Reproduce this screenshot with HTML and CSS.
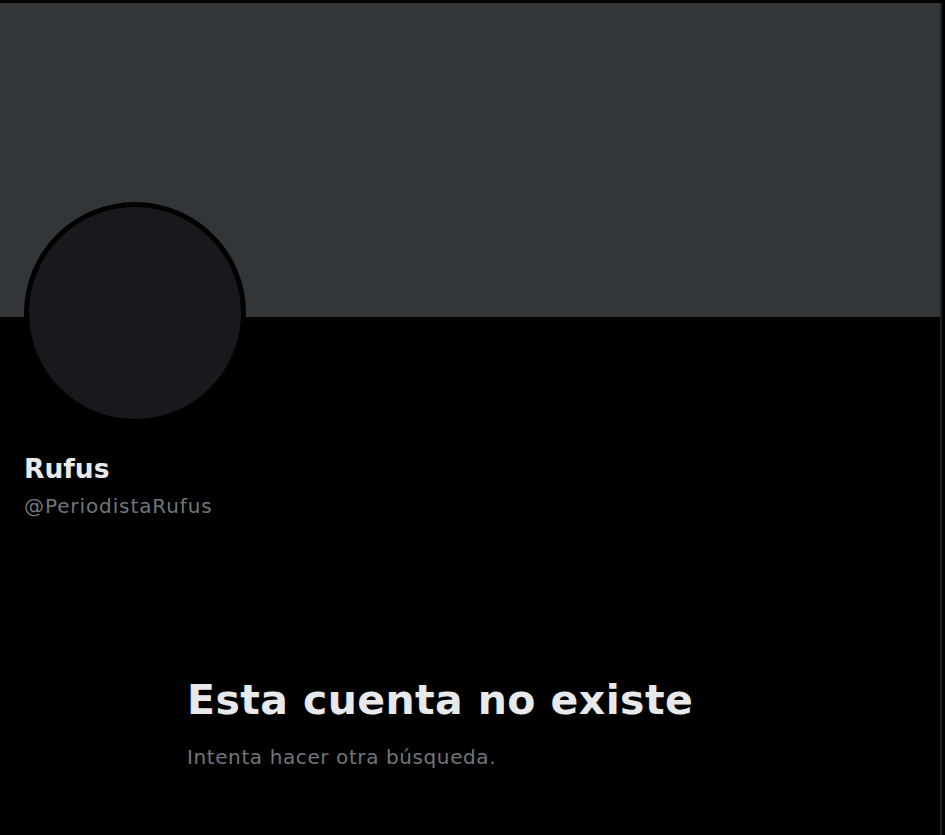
FILE: index.html
```html
<!DOCTYPE html>
<html lang="es">
<head>
<meta charset="utf-8">
<title>Rufus</title>
<link rel="stylesheet" href="styles.css">
</head>
<body>
<div class="page">
  <div class="column">
    <div class="banner"></div>
    <div class="profile">
      <div class="avatar"><div class="avatar-inner"></div></div>
      <div class="name">Rufus</div>
      <div class="handle">@PeriodistaRufus</div>
    </div>
    <div class="empty">
      <h1 class="empty-title">Esta cuenta no existe</h1>
      <p class="empty-sub">Intenta hacer otra búsqueda.</p>
    </div>
  </div>
</div>
</body>
</html>
```

FILE: styles.css
```css
html, body {
  margin: 0;
  padding: 0;
  background: #000;
  height: 100%;
}
body {
  font-family: "DejaVu Sans", Inter, "Liberation Sans", sans-serif;
  color: #e7e9ea;
  overflow: hidden;
}
.page {
  display: flex;
  height: 835px;
  padding-top: 3px;
  box-sizing: border-box;
}
.column {
  width: 940px;
  border-right: 2px solid #1f2124;
  display: flex;
  flex-direction: column;
}
.banner {
  height: 314px;
  background: #333639;
}
.profile {
  padding-left: 24px;
  display: flex;
  flex-direction: column;
  align-items: flex-start;
}
.avatar {
  width: 222px;
  height: 222px;
  margin-top: -115px;
  border-radius: 50%;
  background: #000;
  padding: 5px;
  box-sizing: border-box;
}
.avatar-inner {
  width: 100%;
  height: 100%;
  border-radius: 50%;
  background: #18191c;
}
.name {
  margin-top: 29px;
  font-size: 26.5px;
  line-height: 32px;
  font-weight: 700;
  color: #e7e9ea;
}
.handle {
  margin-top: 9px;
  font-size: 20px;
  line-height: 24px;
  letter-spacing: 0.9px;
  color: #71767b;
}
.empty {
  padding-left: 187px;
  margin-top: 158px;
}
.empty-title {
  margin: 0;
  font-size: 41px;
  line-height: 48px;
  font-weight: 700;
  color: #e7e9ea;
  letter-spacing: 0.4px;
}
.empty-sub {
  margin: 21px 0 0;
  font-size: 20px;
  line-height: 24px;
  letter-spacing: 0.6px;
  color: #71767b;
}
```
